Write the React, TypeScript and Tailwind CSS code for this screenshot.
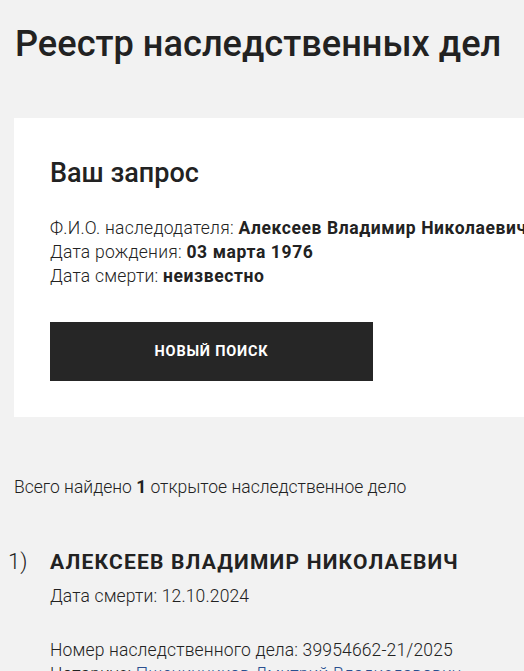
const FONT = "font-['Roboto',Arial,sans-serif]";

export default function App() {
  return (
    <div className={`min-h-screen bg-[#f2f2f2] text-[#222] ${FONT} overflow-hidden`}>
      {/* Title */}
      <h1 className="pl-[15px] pt-[22px] text-[36.2px] leading-[44px] font-medium whitespace-nowrap">
        Реестр наследственных дел
      </h1>

      {/* Request card */}
      <div className="ml-[14px] mt-[52px] w-[560px] bg-white pl-[36px] pt-[38px] pb-[36px]">
        <h2 className="text-[27px] leading-[34px] font-medium">Ваш запрос</h2>
        <div className="mt-[26px] text-[17.5px] leading-[24px] whitespace-nowrap">
          <p>
            <span className="font-light tracking-[0.25px]">Ф.И.О. наследодателя: </span>
            <b className="font-bold tracking-[0.6px]">Алексеев Владимир Николаевич</b>
          </p>
          <p>
            <span className="font-light tracking-[0.25px]">Дата рождения: </span>
            <b className="font-bold tracking-[0.6px]">03 марта 1976</b>
          </p>
          <p>
            <span className="font-light tracking-[0.25px]">Дата смерти: </span>
            <b className="font-bold tracking-[0.6px]">неизвестно</b>
          </p>
        </div>
        <button className="mt-[34px] w-[323px] h-[59px] bg-[#262626] text-white text-[14.5px] font-bold uppercase tracking-[0.8px]">
          Новый поиск
        </button>
      </div>

      {/* Results */}
      <p className="pl-[14px] mt-[58px] text-[17.5px] leading-[24px] font-light whitespace-nowrap">
        Всего найдено <b className="font-bold">1</b> открытое наследственное дело
      </p>

      <div className="mt-[49px] flex">
        <span className="w-[50px] pl-[8px] text-[22px] leading-[28px] font-light">1)</span>
        <div className="text-[17.5px] leading-[24px] font-light tracking-[0.15px] whitespace-nowrap">
          <p className="text-[21px] leading-[28px] font-bold uppercase tracking-[1.2px]">Алексеев Владимир Николаевич</p>
          <p className="mt-[8px]">Дата смерти: 12.10.2024</p>
          <p className="mt-[30px]">Номер наследственного дела: 39954662-21/2025</p>
          <p>
            Нотариус: <a className="text-[#2a4f8f]">Пшеничников Дмитрий Владиславович</a>
          </p>
        </div>
      </div>
    </div>
  );
}
